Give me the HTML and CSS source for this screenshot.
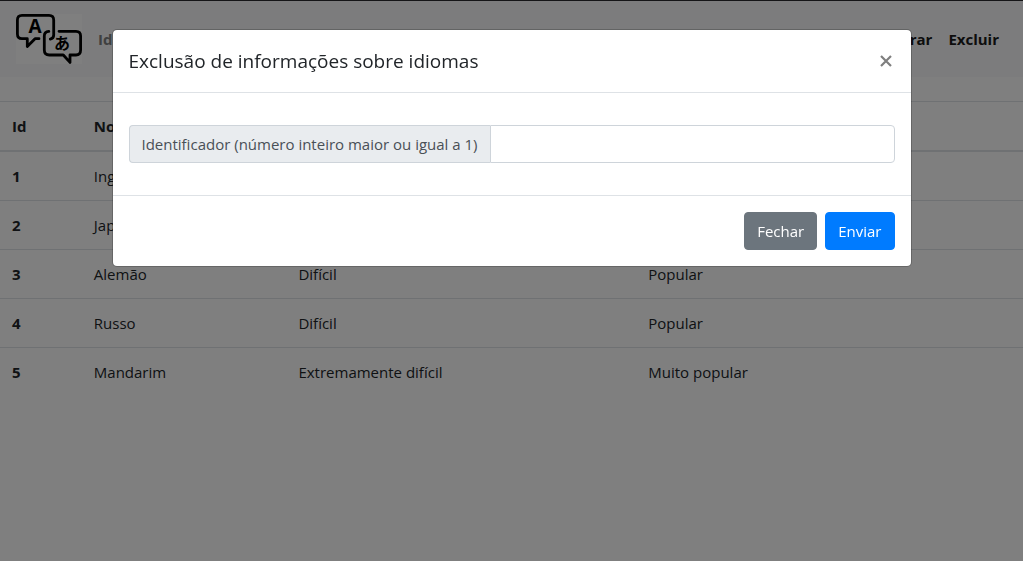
FILE: index.html
```html
<!DOCTYPE html>
<html lang="pt-BR">
<head>
<meta charset="utf-8">
<meta name="viewport" content="width=device-width, initial-scale=1">
<title>Idiomas</title>
<link rel="stylesheet" href="styles.css">
</head>
<body>
<header class="navbar">
  <a class="brand" href="#" aria-label="Início">
    <svg class="logo" viewBox="0 0 66 50" width="66" height="50" aria-hidden="true">
      <g fill="none" stroke="#000" stroke-width="2.8" stroke-linejoin="round" stroke-linecap="round">
        <path d="M23 24.7H19L11.3 32.5V24.7H6Q1.4 24.7 1.4 20V6Q1.4 1.4 6 1.4H33Q37.7 1.4 37.7 6V21Q37.7 24.4 34.3 25.2"/>
        <path d="M32.8 17.4Q28.3 17.9 28.3 22V36Q28.3 41 33.3 41H47.3L54 48.4V41H60Q64.6 41 64.6 36V22Q64.6 17.3 60 17.3H43"/>
      </g>
      <text class="logo-latin" x="19" y="19" text-anchor="middle">A</text>
      <text class="logo-kana" x="46" y="35" text-anchor="middle">あ</text>
    </svg>
  </a>
  <nav class="nav">
    <a class="nav-link muted" href="#">Idiomas</a>
    <a class="nav-link push" href="#">Alterar</a>
    <a class="nav-link" href="#">Excluir</a>
  </nav>
</header>

<main>
  <table class="table">
    <colgroup><col class="col-id"><col class="col-name"><col class="col-level"><col class="col-rank"></colgroup>
    <thead>
      <tr><th scope="col">Id</th><th scope="col">Nome</th><th scope="col">Dificuldade</th><th scope="col">Popularidade</th></tr>
    </thead>
    <tbody>
      <tr><th scope="row">1</th><td>Inglês</td><td>Fácil</td><td>Muito popular</td></tr>
      <tr><th scope="row">2</th><td>Japonês</td><td>Difícil</td><td>Popular</td></tr>
      <tr><th scope="row">3</th><td>Alemão</td><td>Difícil</td><td>Popular</td></tr>
      <tr><th scope="row">4</th><td>Russo</td><td>Difícil</td><td>Popular</td></tr>
      <tr><th scope="row">5</th><td>Mandarim</td><td>Extremamente difícil</td><td>Muito popular</td></tr>
    </tbody>
  </table>
</main>

<div class="backdrop">
  <form class="modal" role="dialog" aria-modal="true" aria-labelledby="modal-title">
    <div class="modal-header">
      <h5 class="modal-title" id="modal-title">Exclusão de informações sobre idiomas</h5>
      <button class="close" type="button" aria-label="Fechar janela">
        <svg viewBox="0 0 12 12" width="12" height="12" aria-hidden="true"><path d="M1 1L11 11M11 1L1 11" stroke="currentColor" stroke-width="2.2"/></svg>
      </button>
    </div>
    <div class="modal-body">
      <div class="input-group">
        <label class="input-label" for="ident">Identificador (número inteiro maior ou igual a 1)</label>
        <input class="input" id="ident" type="text" inputmode="numeric">
      </div>
    </div>
    <div class="modal-footer">
      <button class="btn btn-secondary" type="button">Fechar</button>
      <button class="btn btn-primary" type="submit">Enviar</button>
    </div>
  </form>
</div>
</body>
</html>
```
FILE: styles.css
```css
*, *::before, *::after { box-sizing: border-box; }

body {
  margin: 0;
  border-top: 1px solid #2a2a2e;
  background: #fff;
  color: #212529;
  font-family: "Open Sans", "Noto Sans", sans-serif;
  font-size: 15px;
  font-weight: 400;
  line-height: 24px;
}

.navbar {
  display: flex;
  align-items: center;
  padding: 8px 16px;
  margin-bottom: 24px;
  background: #f8f9fa;
}
.brand { padding: 5px 0; margin-right: 8px; }
.logo { display: block; background: #fff; }
.logo-latin { font: bold 19px "Open Sans", sans-serif; }
.logo-kana { font: bold 16px "Noto Sans CJK JP", sans-serif; }
.nav { display: flex; flex: 1; }
.nav-link {
  padding: 8px;
  color: #1a1a1a;
  font-weight: 700;
  text-decoration: none;
}
.nav-link.muted { color: #7f8080; }
.nav-link.push { margin-left: auto; }

.table {
  width: 100%;
  table-layout: fixed;
  border-spacing: 0;
}
.col-id { width: 8%; }
.col-name { width: 20%; }
.col-level { width: 34.2%; }
.col-rank { width: 37.8%; }
.table th, .table td {
  padding: 12px;
  border-top: 1px solid #dee2e6;
  text-align: left;
  vertical-align: top;
}
.table th { font-weight: 700; }
.table thead th { border-bottom: 1px solid #dee2e6; }

.backdrop {
  position: fixed;
  inset: 0;
  padding: 29px 8px;
  background: rgba(0, 0, 0, .5);
}
.modal {
  max-width: 800px;
  margin: 0 auto;
  border: 1px solid rgba(0, 0, 0, .2);
  border-radius: 5px;
  background: #fff;
  background-clip: padding-box;
}
.modal-header {
  display: flex;
  justify-content: space-between;
  align-items: center;
  padding: 16px;
  border-bottom: 1px solid #dee2e6;
}
.modal-title {
  margin: 0;
  font-size: 19px;
  font-weight: 500;
  line-height: 30px;
}
.close {
  display: flex;
  padding: 3px;
  border: 0;
  background: none;
  color: #7f7f7f;
}
.modal-body { padding: 32px 16px; }
.input-group { display: flex; }
.input-label {
  padding: 6px 12px;
  border: 1px solid #ced4da;
  border-right: 0;
  border-radius: 4px 0 0 4px;
  background: #e9ecef;
  color: #495057;
}
.input {
  flex: 1;
  min-width: 0;
  padding: 6px 12px;
  border: 1px solid #ced4da;
  border-radius: 0 4px 4px 0;
  background: #fff;
  color: #495057;
  font: inherit;
}
.modal-footer {
  display: flex;
  justify-content: flex-end;
  gap: 8px;
  padding: 16px;
  border-top: 1px solid #dee2e6;
}
.btn {
  padding: 6px 12px;
  border: 1px solid transparent;
  border-radius: 4px;
  color: #fff;
  font: inherit;
}
.btn-secondary { border-color: #6c757d; background: #6c757d; }
.btn-primary { border-color: #007bff; background: #007bff; }
```
